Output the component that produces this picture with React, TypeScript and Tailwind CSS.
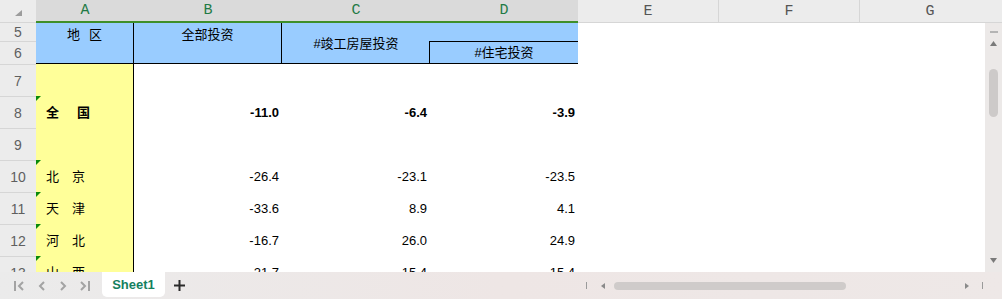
import React from 'react';

const rows = [
  { n: 7 },
  { n: 8, a: ['全', '国'], v: ['-11.0', '-6.4', '-3.9'], bold: true },
  { n: 9 },
  { n: 10, a: ['北', '京'], v: ['-26.4', '-23.1', '-23.5'] },
  { n: 11, a: ['天', '津'], v: ['-33.6', '8.9', '4.1'] },
  { n: 12, a: ['河', '北'], v: ['-16.7', '26.0', '24.9'] },
  { n: 13, a: ['山', '西'], v: ['-21.7', '15.4', '15.4'] },
];

const rowStart = ['row-start-3', 'row-start-4', 'row-start-5', 'row-start-6', 'row-start-7', 'row-start-8', 'row-start-9'];
const colStart = ['col-start-3', 'col-start-4', 'col-start-5'];

function Tri() {
  return (
    <svg className="absolute left-0 top-0" width="5" height="5" viewBox="0 0 5 5">
      <polygon points="0,0 5,0 0,5" fill="#0a8a0a" />
    </svg>
  );
}

export default function App() {
  return (
    <div className="w-[1002px] h-[299px] flex flex-col overflow-hidden bg-white font-['Liberation_Sans','Noto_Sans_CJK_SC',sans-serif] text-black">
      {/* column header */}
      <div className="flex h-[23px] shrink-0 font-['Liberation_Mono',monospace] text-[15px]">
        <div className="relative w-[36px] bg-[#ececec] border-b border-[#d6d6d6]">
          <svg className="absolute left-[15px] top-[10px]" width="7" height="6" viewBox="0 0 7 6">
            <polygon points="7,0 7,6 0,6" fill="#9c9c9c" />
          </svg>
        </div>
        <div className="w-[98px] bg-[#dadada] border-b-2 border-[#3f8f2a] text-[#1f7a45] flex items-center justify-center pt-[2px]">A</div>
        <div className="w-[148px] bg-[#dadada] border-b-2 border-[#3f8f2a] text-[#1f7a45] flex items-center justify-center pt-[2px]">B</div>
        <div className="w-[148px] bg-[#dadada] border-b-2 border-[#3f8f2a] text-[#1f7a45] flex items-center justify-center pt-[2px]">C</div>
        <div className="w-[148px] bg-[#dadada] border-b-2 border-[#3f8f2a] text-[#1f7a45] flex items-center justify-center pt-[2px]">D</div>
        <div className="w-[141px] bg-[#ececec] border-b border-r border-[#d6d6d6] text-[#555] flex items-center justify-center pt-[2px]">E</div>
        <div className="w-[141px] bg-[#ececec] border-b border-r border-[#d6d6d6] text-[#555] flex items-center justify-center pt-[2px]">F</div>
        <div className="flex-1 bg-[#ececec] border-b border-[#d6d6d6] text-[#555] flex items-center justify-center pt-[2px] pr-[2px]">G</div>
      </div>

      {/* middle */}
      <div className="flex h-[249px] shrink-0">
        <div className="flex-1 overflow-hidden">
          <div className="grid grid-cols-[36px_98px_148px_148px_148px_141px_141px_1fr] grid-rows-[18px_23px_32px_32px_32px_32px_32px_32px_32px] text-[13px]">
            {/* row header */}
            <div className="col-start-1 row-start-1 bg-[#ececec] flex items-center justify-center text-[14px] text-[#5f5f5f] pt-[1px]">5</div>
            <div className="col-start-1 row-start-2 bg-[#ececec] border-t border-[#d6d6d6] flex items-center justify-center text-[14px] text-[#5f5f5f] pt-[1px]">6</div>
            {rows.map((r, i) => (
              <div key={'h' + r.n} className={`col-start-1 ${rowStart[i]} bg-[#ececec] border-t border-[#d6d6d6] flex items-center justify-center text-[14px] text-[#5f5f5f] pt-[2px]`}>
                {r.n}
              </div>
            ))}

            {/* header cells */}
            <div className="col-start-2 row-start-1 row-span-2 bg-[#99ccff] border-r border-b border-black flex justify-center pt-[4px] leading-[16px]">
              <span>地</span>
              <span className="ml-[9px]">区</span>
            </div>
            <div className="col-start-3 row-start-1 row-span-2 bg-[#99ccff] border-r border-b border-black flex justify-center pt-[4px] leading-[16px]">
              全部投资
            </div>
            <div className="col-start-4 row-start-1 row-span-2 bg-[#99ccff] border-b border-black flex items-center justify-center pt-[1px]">
              #竣工房屋投资
            </div>
            <div className="col-start-5 row-start-1 bg-[#99ccff]" />
            <div className="col-start-5 row-start-2 bg-[#99ccff] border-t border-l border-b border-black -ml-px flex items-center justify-center pt-[1px]">
              #住宅投资
            </div>

            {/* data */}
            {rows.map((r, i) => (
              <div
                key={'a' + r.n}
                className={`col-start-2 ${rowStart[i]} relative bg-[#ffff99] border-r border-black flex items-center pl-[10px] pt-[2px] ${r.bold ? 'font-bold' : ''}`}
              >
                {r.a && <Tri />}
                {r.a && (
                  <>
                    <span>{r.a[0]}</span>
                    <span className={r.bold ? 'ml-[18px]' : 'ml-[13px]'}>{r.a[1]}</span>
                  </>
                )}
              </div>
            ))}
            {rows.map((r, i) =>
              r.v
                ? r.v.map((v, j) => (
                    <div
                      key={'v' + r.n + j}
                      className={`${colStart[j]} ${rowStart[i]} flex items-center justify-end pr-[3px] pt-[2px] ${r.bold ? 'font-bold' : ''}`}
                    >
                      {v}
                    </div>
                  ))
                : null
            )}
          </div>
        </div>

        {/* vertical scrollbar */}
        <div className="w-[17px] bg-[#ece9e8] flex flex-col items-center">
          <div className="mt-[8px] w-[8px] h-[2px] bg-[#b4b4b4]" />
          <svg className="mt-[8px]" width="7" height="5" viewBox="0 0 7 5">
            <polygon points="3.5,0 7,5 0,5" fill="#7a7a7a" />
          </svg>
          <div className="mt-[23px] w-[9px] h-[48px] rounded-full bg-[#cdcac9]" />
          <div className="flex-1" />
          <svg className="mb-[9px]" width="7" height="5" viewBox="0 0 7 5">
            <polygon points="0,0 7,0 3.5,5" fill="#7a7a7a" />
          </svg>
        </div>
      </div>

      {/* tab bar */}
      <div className="h-[27px] shrink-0 flex bg-linear-to-r from-[#ebebeb] via-[#eee6e5] to-[#eee8e7]">
        <div className="flex items-center h-full">
          <svg className="ml-[14px]" width="10" height="10" viewBox="0 0 10 10">
            <path d="M1 0 V10 M9 1 L5 5 L9 9" stroke="#a3a3a3" strokeWidth="2" fill="none" />
          </svg>
          <svg className="ml-[14px]" width="7" height="10" viewBox="0 0 7 10">
            <path d="M6 1 L2 5 L6 9" stroke="#a3a3a3" strokeWidth="2" fill="none" />
          </svg>
          <svg className="ml-[15px]" width="7" height="10" viewBox="0 0 7 10">
            <path d="M1 1 L5 5 L1 9" stroke="#a3a3a3" strokeWidth="2" fill="none" />
          </svg>
          <svg className="ml-[13px]" width="10" height="10" viewBox="0 0 10 10">
            <path d="M9 0 V10 M1 1 L5 5 L1 9" stroke="#a3a3a3" strokeWidth="2" fill="none" />
          </svg>
          <div className="ml-[12px] self-start w-[63px] h-[25px] bg-white rounded-b-[5px] flex items-center justify-center text-[13px] font-bold text-[#14805e] pt-[1px]">
            Sheet1
          </div>
          <svg className="ml-[9px]" width="11" height="11" viewBox="0 0 11 11">
            <path d="M5.5 0 V11 M0 5.5 H11" stroke="#2a2a2a" strokeWidth="2" fill="none" />
          </svg>
        </div>
        <div className="flex-1" />
        <div className="w-[400px] flex items-center">
          <div className="ml-[1px] w-px h-[7px] bg-[#9a9a9a]" />
          <svg className="ml-[14px]" width="4" height="6" viewBox="0 0 4 6">
            <polygon points="4,0 4,6 0,3" fill="#8a8a8a" />
          </svg>
          <div className="ml-[9px] w-[232px] h-[8px] rounded-full bg-[#cfcbca]" />
          <div className="flex-1" />
          <svg width="4" height="6" viewBox="0 0 4 6">
            <polygon points="0,0 0,6 4,3" fill="#8a8a8a" />
          </svg>
          <div className="ml-[13px] mr-[2px] w-px h-[7px] bg-[#9a9a9a]" />
        </div>
        <div className="w-[17px]" />
      </div>
    </div>
  );
}
